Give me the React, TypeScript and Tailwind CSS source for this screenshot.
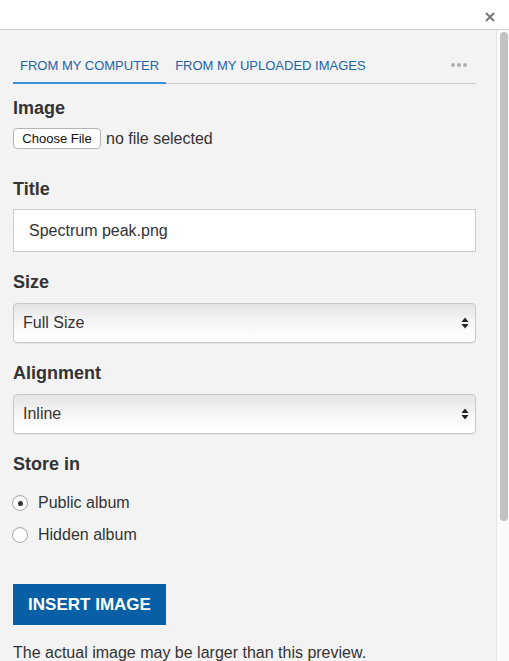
import React from "react";

function SelectBox({ value }: { value: string }) {
  return (
    <div className="relative h-[40px] rounded-[4px] border border-[#c8c8c8] bg-gradient-to-b from-[#e4e4e4] via-[#f7f7f7] to-[#ffffff] shadow-[0_1px_1px_rgba(0,0,0,0.06)] flex items-center pl-[9px] text-[16px] text-[#333]">
      <span>{value}</span>
      <svg className="absolute right-[6px] top-1/2 -translate-y-1/2" width="8" height="13" viewBox="0 0 8 13">
        <polygon points="4,1 7.5,5.5 0.5,5.5" fill="#222" />
        <polygon points="4,12 7.5,7.5 0.5,7.5" fill="#222" />
      </svg>
    </div>
  );
}

function Radio({ checked, label }: { checked?: boolean; label: string }) {
  return (
    <div className="h-[32px] flex items-center">
      <span className="w-[16px] h-[16px] ml-[12px] rounded-full border border-[#a9a9a9] bg-white flex items-center justify-center shadow-[inset_0_1px_1px_rgba(0,0,0,0.08)]">
        {checked && <span className="w-[5px] h-[5px] rounded-full bg-[#333]" />}
      </span>
      <span className="ml-[10px] text-[16px] text-[#333]">{label}</span>
    </div>
  );
}

export default function App() {
  return (
    <div className="w-[509px] h-[661px] overflow-hidden flex flex-col bg-[#f3f3f3] text-[#333]" style={{ fontFamily: '"Liberation Sans", Arial, sans-serif' }}>
      <div className="h-[30px] bg-white border-b border-[#cfcfcf] flex items-center justify-end pr-[14px] shrink-0">
        <svg width="10" height="10" viewBox="0 0 10 10" className="mt-[5px]">
          <path d="M1 1 L9 9 M9 1 L1 9" stroke="#777" strokeWidth="2" />
        </svg>
      </div>
      <div className="flex flex-1 min-h-0">
        <div className="flex-1 min-w-0 pl-[13px] pr-[20px] pt-[19px]">
          <div className="flex items-end border-b border-[#cccccc] h-[35px]">
            <div className="h-[35px] px-[7px] flex items-center text-[13px] text-[#2563a6] border-b-[2px] border-[#3a8fd9] -mb-px">
              FROM MY COMPUTER
            </div>
            <div className="h-[35px] pl-[9px] flex items-center text-[13px] text-[#2563a6]">
              FROM MY UPLOADED IMAGES
            </div>
            <div className="flex-1" />
            <div className="h-[35px] flex items-center gap-[2px] mr-[9px] mb-[1px]">
              <span className="w-[4px] h-[4px] rounded-full bg-[#b0b0b0]" />
              <span className="w-[4px] h-[4px] rounded-full bg-[#b0b0b0]" />
              <span className="w-[4px] h-[4px] rounded-full bg-[#b0b0b0]" />
            </div>
          </div>

          <div className="mt-[13px] h-[22px] leading-[22px] text-[18px] font-bold">Image</div>
          <div className="mt-[9px] flex items-center h-[21px]">
            <div className="h-[21px] w-[88px] rounded-[4px] border border-[#b5b5b5] bg-white flex items-center justify-center text-[13px] text-[#111]">
              Choose File
            </div>
            <span className="ml-[5px] text-[16px] text-[#333]">no file selected</span>
          </div>

          <div className="mt-[29px] h-[22px] leading-[22px] text-[18px] font-bold">Title</div>
          <div className="mt-[9px] h-[43px] border border-[#cccccc] bg-white flex items-center pl-[15px] text-[16px] text-[#333]">
            Spectrum peak.png
          </div>

          <div className="mt-[19px] h-[22px] leading-[22px] text-[18px] font-bold">Size</div>
          <div className="mt-[10px]">
            <SelectBox value="Full Size" />
          </div>

          <div className="mt-[19px] h-[22px] leading-[22px] text-[18px] font-bold">Alignment</div>
          <div className="mt-[10px]">
            <SelectBox value="Inline" />
          </div>

          <div className="mt-[19px] h-[22px] leading-[22px] text-[18px] font-bold">Store in</div>
          <div className="mt-[12px] -ml-[13px]">
            <Radio checked label="Public album" />
            <Radio label="Hidden album" />
          </div>

          <div className="mt-[33px] h-[41px] w-[153px] bg-[#095fa5] flex items-center justify-center text-white text-[17px] font-bold">
            INSERT IMAGE
          </div>

          <div className="mt-[16px] h-[24px] leading-[24px] text-[16px] text-[#333] whitespace-nowrap">
            The actual image may be larger than this preview.
          </div>
        </div>
        <div className="w-[13px] shrink-0 bg-[#fafafa] border-l border-[#e6e6e6] pt-[2px] pl-[3px]">
          <div className="w-[8px] h-[489px] rounded-full bg-[#c1c1c1]" />
        </div>
      </div>
    </div>
  );
}
